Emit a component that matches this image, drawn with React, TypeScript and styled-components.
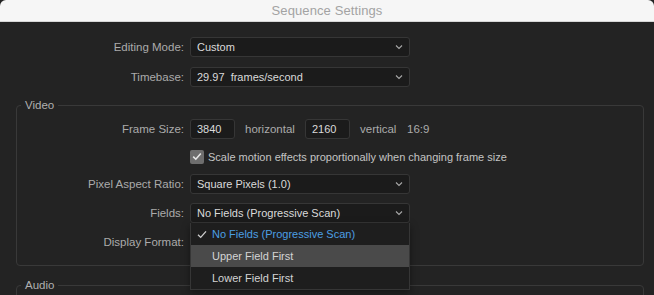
import React from 'react';
import styled, { createGlobalStyle } from 'styled-components';

const GlobalStyle = createGlobalStyle`
  html, body {
    margin: 0;
    padding: 0;
    background: #232323;
  }
  body {
    font-family: "Liberation Sans", Arial, sans-serif;
    overflow: hidden;
  }
`;

const Window = styled.div`
  width: 654px;
  height: 295px;
  display: flex;
  flex-direction: column;
  overflow: hidden;
  background: #232323;
`;

const Titlebar = styled.div`
  height: 21px;
  flex: none;
  display: flex;
  align-items: center;
  justify-content: center;
  background: #f6f6f6;
  border-bottom: 1px solid #d6d6d6;
  border-top-left-radius: 6px;
  border-top-right-radius: 6px;
  color: #a3a3a3;
  font-size: 13px;
  letter-spacing: 0.1px;
`;

const Body = styled.div`
  flex: 1;
  padding: 15px 10px 0 16px;
  display: flex;
  flex-direction: column;
`;

const Rows = styled.div<{ $inset?: boolean }>`
  display: flex;
  flex-direction: column;
  gap: ${(p) => (p.$inset ? '9px' : '10px')};
  padding: ${(p) => (p.$inset ? '6px 0 13px' : '0 0 0 1px')};
`;

const Row = styled.div<{ $h?: number }>`
  display: flex;
  align-items: center;
  gap: 6px;
  height: ${(p) => p.$h ?? 20}px;
`;

const Label = styled.div`
  width: 167px;
  flex: none;
  text-align: right;
  color: #ababab;
  font-size: 11.5px;
  white-space: nowrap;
`;

const SelectWrap = styled.div`
  position: relative;
  width: 220px;
  height: 20px;
`;

const SelectBox = styled.div`
  box-sizing: border-box;
  height: 20px;
  width: 100%;
  display: flex;
  align-items: center;
  justify-content: space-between;
  padding: 0 6px 0 6px;
  background: #1b1b1b;
  border: 1px solid #363636;
  border-radius: 3px;
  color: #dadada;
  font-size: 11px;
  white-space: pre;
`;

const Chevron = () => (
  <svg width="8" height="6" viewBox="0 0 8 6" fill="none">
    <path d="M1 1.5 L4 4.5 L7 1.5" stroke="#a8a8a8" strokeWidth="1.1" />
  </svg>
);

const Select: React.FC<{ value: string; children?: React.ReactNode }> = ({ value, children }) => (
  <SelectWrap>
    <SelectBox>
      <span>{value}</span>
      <Chevron />
    </SelectBox>
    {children}
  </SelectWrap>
);

const NumInput = styled.div`
  box-sizing: border-box;
  width: 45px;
  height: 20px;
  flex: none;
  display: flex;
  align-items: center;
  padding-left: 6px;
  background: #1b1b1b;
  border: 1px solid #363636;
  border-radius: 3px;
  color: #dadada;
  font-size: 11px;
`;

const Unit = styled.span<{ $w: number }>`
  width: ${(p) => p.$w}px;
  flex: none;
  color: #ababab;
  font-size: 11.5px;
  padding-left: 4px;
  box-sizing: border-box;
  white-space: nowrap;
`;

const CheckRow = styled.div`
  display: flex;
  align-items: center;
  gap: 4px;
  color: #c4c4c4;
  font-size: 11px;
`;

const CheckBox = styled.span`
  width: 14px;
  height: 14px;
  border-radius: 2px;
  background: #6e6e6e;
  display: inline-flex;
  align-items: center;
  justify-content: center;
`;

const Group = styled.fieldset<{ $gap: number }>`
  margin: ${(p) => p.$gap}px 0 0;
  padding: 0;
  min-width: 0;
  border: 1px solid #393939;
  border-radius: 4px;
`;

const Legend = styled.legend`
  margin-left: 4px;
  padding: 0 4px;
  line-height: 16px;
  color: #b0b0b0;
  font-size: 11.5px;
`;

const GroupFill = styled.div`
  height: 40px;
`;

const Menu = styled.div`
  position: absolute;
  top: 100%;
  left: 0;
  width: 100%;
  box-sizing: border-box;
  z-index: 5;
  background: #1e1e1e;
  border: 1px solid #363636;
  border-top: none;
  box-shadow: 0 3px 8px rgba(0, 0, 0, 0.4);
`;

const MenuItem = styled.div<{ $selected?: boolean; $hover?: boolean }>`
  height: 22px;
  display: flex;
  align-items: center;
  padding-left: 5px;
  gap: 5px;
  background: ${(p) => (p.$hover ? '#4a4a4a' : 'transparent')};
  color: ${(p) => (p.$selected ? '#4c9fe3' : '#d4d4d4')};
  font-size: 11px;
`;

const CheckSlot = styled.span`
  width: 11px;
  display: inline-flex;
  justify-content: center;
`;

const fieldOptions = ['No Fields (Progressive Scan)', 'Upper Field First', 'Lower Field First'];

export default function App() {
  return (
    <Window>
      <GlobalStyle />
      <Titlebar>Sequence Settings</Titlebar>
      <Body>
        <Rows>
          <Row>
            <Label>Editing Mode:</Label>
            <Select value="Custom" />
          </Row>
          <Row>
            <Label>Timebase:</Label>
            <Select value="29.97  frames/second" />
          </Row>
        </Rows>

        <Group $gap={10}>
          <Legend>Video</Legend>
          <Rows $inset>
            <Row>
              <Label>Frame Size:</Label>
              <NumInput>3840</NumInput>
              <Unit $w={58}>horizontal</Unit>
              <NumInput>2160</NumInput>
              <Unit $w={41}>vertical</Unit>
              <Unit $w={40}>16:9</Unit>
            </Row>
            <Row $h={17}>
              <Label />
              <CheckRow>
                <CheckBox>
                  <svg width="10" height="9" viewBox="0 0 10 9" fill="none">
                    <path d="M1.2 4.6 L3.8 7.2 L8.8 1.4" stroke="#e6e6e6" strokeWidth="1.6" />
                  </svg>
                </CheckBox>
                Scale motion effects proportionally when changing frame size
              </CheckRow>
            </Row>
            <Row>
              <Label>Pixel Aspect Ratio:</Label>
              <Select value="Square Pixels (1.0)" />
            </Row>
            <Row>
              <Label>Fields:</Label>
              <Select value="No Fields (Progressive Scan)">
                <Menu>
                  {fieldOptions.map((o, i) => (
                    <MenuItem key={o} $selected={i === 0} $hover={i === 1}>
                      <CheckSlot>
                        {i === 0 && (
                          <svg width="10" height="9" viewBox="0 0 10 9" fill="none">
                            <path d="M1 4.8 L3.7 7.4 L9 1.4" stroke="#cfcfcf" strokeWidth="1.3" />
                          </svg>
                        )}
                      </CheckSlot>
                      {o}
                    </MenuItem>
                  ))}
                </Menu>
              </Select>
            </Row>
            <Row>
              <Label>Display Format:</Label>
              <Select value="" />
            </Row>
          </Rows>
        </Group>

        <Group $gap={11}>
          <Legend>Audio</Legend>
          <GroupFill />
        </Group>
      </Body>
    </Window>
  );
}
